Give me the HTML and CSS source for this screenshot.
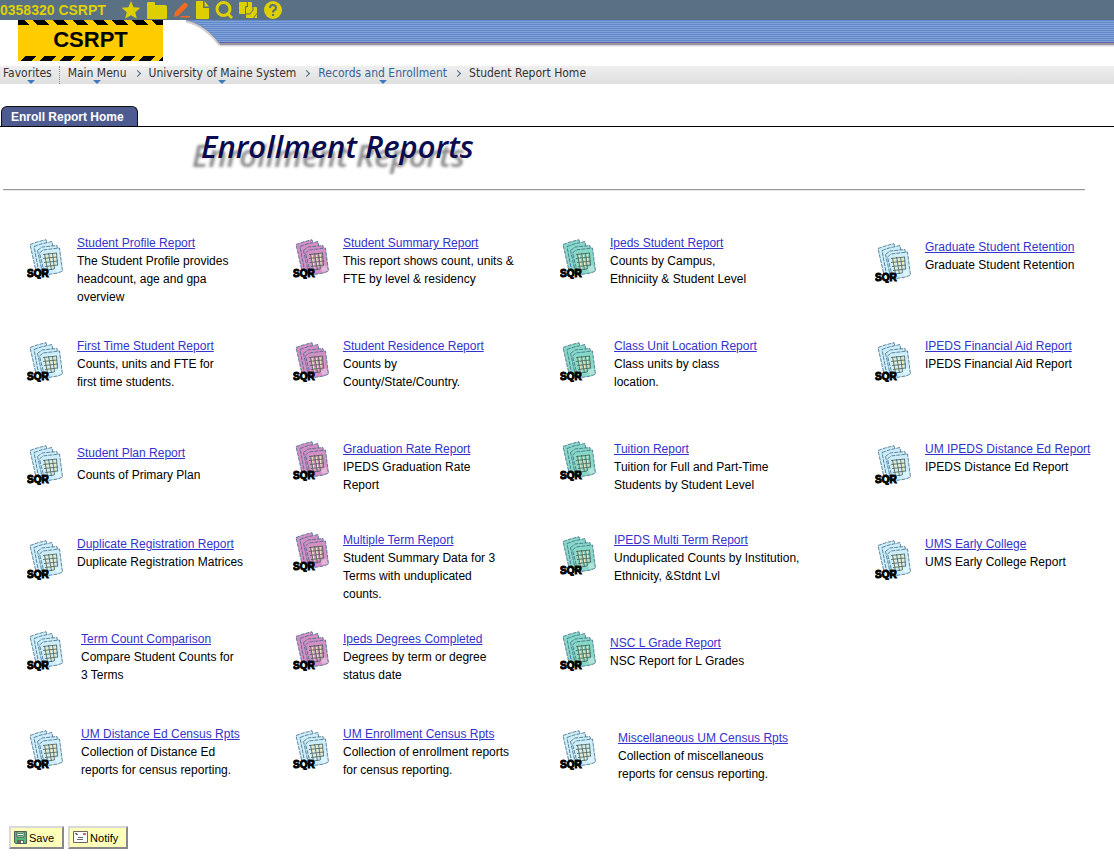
FILE: index.html
```html
<!DOCTYPE html>
<html lang="en">
<head>
<meta charset="utf-8">
<title>Student Report Home</title>
<link rel="stylesheet" href="styles.css">
</head>
<body>
<svg class="defs" aria-hidden="true">
  <symbol id="sheets" viewBox="0 0 36 40">
    <g stroke="#3f6a84" stroke-width=".8" stroke-dasharray="4 1">
      <path fill="currentColor" d="M3 5.500 L10 3 L19 .7 L27 27 L9 32 Z"/>
      <path fill="currentColor" d="M7 7.500 L14 5 L25 2.500 L29 30 L12 34 Z"/>
      <path fill="currentColor" d="M10.500 11.500 L15 8 L30 6.500 L33 31 L16 36 Z"/>
      <path fill="currentColor" d="M12.500 14 L16 11 L32.500 9 L35.500 32 L31 34 L18 36 Z"/>
    </g>
    <path fill="none" stroke="#eee6bd" stroke-width="1.400" d="M19 16l2 13M23 16l2 12M27 15l1 11"/>
    <path fill="none" stroke="#4a5e50" stroke-width=".8" d="M16 15.500l14-1.500M16 19.500l14-1.500M17 23.500l14-1.500M18 27.500l13-1.500M20 31l7-1M17.500 15l3 16M21.500 14l3 17M25.500 14l2 16M29.500 14l1 12"/>
    <path fill="#fff" fill-opacity=".35" d="M28 29l5-3 2 6-6 1z"/>
  </symbol>
</svg>
<header>
  <div class="topbar">
    <strong>0358320 CSRPT</strong>
    <span class="tools">
      <svg width="20" height="20" viewBox="0 0 20 20"><path d="M10 1l2.600 6.300 6.800.5-5.200 4.400 1.700 6.600L10 15.200 4.100 18.800l1.700-6.600L.6 7.800l6.800-.5z"/></svg>
      <svg width="20" height="20" viewBox="0 0 20 20"><path d="M1 2h6q1 0 1 1v2h10q2 0 2 2v11q0 1-1 1H1q-1 0-1-1V3q0-1 1-1z"/></svg>
      <svg class="pencil" width="17" height="20" viewBox="0 0 17 20"><path d="M1 17l1-5 8-8 4 3-9 9zM9 16h8v1.500H6zM11 3q3-1 4 3l-1 1-4-3z"/></svg>
      <svg width="13" height="20" viewBox="0 0 13 20"><path d="M1 1h6v7h6v10q0 1-1 1H1q-1 0-1-1V2q0-1 1-1zM8.500 1L13 6.500H8.500z"/></svg>
      <svg width="18" height="20" viewBox="0 0 18 20"><circle cx="8.500" cy="9" r="6.500" fill="none" stroke="#ded000" stroke-width="3"/><path d="M12 15l2-2 4 4-2 2z"/></svg>
      <svg width="18" height="20" viewBox="0 0 18 20"><path d="M1 2h6q1 0 1 1v3H7q-1 0-1 1v7H1q-1 0-1-1V3q0-1 1-1zM9 2h3q1 0 1 1v4h-2L9 9z"/><path d="M8 7h9q1 0 1 1v5l-4 5H8q-1 0-1-1V8q0-1 1-1zM18 14v4h-3z"/><path d="M7 14h4l3-4v-3" fill="none" stroke="#5a7083"/></svg>
      <svg width="20" height="20" viewBox="0 0 20 20"><circle cx="10" cy="10" r="9"/><path d="M7 8q0-3 3-3t3 3q0 1.500-2 2.500-1 .5-1 2M10 14v2" fill="none" stroke="#5a7083" stroke-width="2"/></svg>
    </span>
  </div>
  <div class="masthead">
    <div class="banner">CSRPT</div>
    <svg class="curve" width="37" height="27" viewBox="0 0 37 27">
      <defs><pattern id="lines" width="2" height="2" patternUnits="userSpaceOnUse"><path fill="#6389c8" d="M0 0h2v1H0z"/><path fill="#7ea1d9" d="M0 1h2v1H0z"/></pattern></defs>
      <path d="M3 1C17 4 27 12 37 25" fill="none" stroke="#d2d2d6" stroke-width="3"/>
      <path d="M3 0H37V24C27 11 17 3 3 0z" fill="url(#lines)"/>
      <path d="M3 0C17 3 27 11 37 24" fill="none" stroke="#8688a8"/>
    </svg>
    <div class="stripes"></div>
  </div>
</header>
<nav aria-label="Breadcrumb">
  <a class="menu favorites" href="#">Favorites</a>
  <a class="menu" href="#">Main Menu</a><i class="chevron"></i>
  <a class="menu" href="#">University of Maine System</a><i class="chevron"></i>
  <a class="menu current" href="#">Records and Enrollment</a><i class="chevron"></i>
  <span>Student Report Home</span>
</nav>
<div class="tabs"><a class="tab" href="#">Enroll Report Home</a></div>
<main>
  <h1>Enrollment Reports</h1>
  <hr>
  <div class="reports">
    <article><svg class="sqr blue"><use href="#sheets"/><text y="38">SQR</text></svg><div><a href="#">Student Profile Report</a><p>The Student Profile provides<br>headcount, age and gpa<br>overview</p></div></article>
    <article><svg class="sqr pink"><use href="#sheets"/><text y="38">SQR</text></svg><div><a href="#">Student Summary Report</a><p>This report shows count, units &amp;<br>FTE by level &amp; residency</p></div></article>
    <article><svg class="sqr green"><use href="#sheets"/><text y="38">SQR</text></svg><div><a href="#">Ipeds Student Report</a><p>Counts by Campus,<br>Ethniciity &amp; Student Level</p></div></article>
    <article class="lower"><svg class="sqr blue"><use href="#sheets"/><text y="38">SQR</text></svg><div><a href="#">Graduate Student Retention</a><p>Graduate Student Retention</p></div></article>

    <article><svg class="sqr blue"><use href="#sheets"/><text y="38">SQR</text></svg><div><a href="#">First Time Student Report</a><p>Counts, units and FTE for<br>first time students.</p></div></article>
    <article><svg class="sqr pink"><use href="#sheets"/><text y="38">SQR</text></svg><div><a href="#">Student Residence Report</a><p>Counts by<br>County/State/Country.</p></div></article>
    <article class="indent"><svg class="sqr green"><use href="#sheets"/><text y="38">SQR</text></svg><div><a href="#">Class Unit Location Report</a><p>Class units by class<br>location.</p></div></article>
    <article><svg class="sqr blue"><use href="#sheets"/><text y="38">SQR</text></svg><div><a href="#">IPEDS Financial Aid Report</a><p>IPEDS Financial Aid Report</p></div></article>

    <article class="lower raised spaced"><svg class="sqr blue"><use href="#sheets"/><text y="38">SQR</text></svg><div><a href="#">Student Plan Report</a><p>Counts of Primary Plan</p></div></article>
    <article class="raised"><svg class="sqr pink"><use href="#sheets"/><text y="38">SQR</text></svg><div><a href="#">Graduation Rate Report</a><p>IPEDS Graduation Rate<br>Report</p></div></article>
    <article class="indent raised"><svg class="sqr green"><use href="#sheets"/><text y="38">SQR</text></svg><div><a href="#">Tuition Report</a><p>Tuition for Full and Part-Time<br>Students by Student Level</p></div></article>
    <article><svg class="sqr blue"><use href="#sheets"/><text y="38">SQR</text></svg><div><a href="#">UM IPEDS Distance Ed Report</a><p>IPEDS Distance Ed Report</p></div></article>

    <article class="lower"><svg class="sqr blue"><use href="#sheets"/><text y="38">SQR</text></svg><div><a href="#">Duplicate Registration Report</a><p>Duplicate Registration Matrices</p></div></article>
    <article class="raised"><svg class="sqr pink"><use href="#sheets"/><text y="38">SQR</text></svg><div><a href="#">Multiple Term Report</a><p>Student Summary Data for 3<br>Terms with unduplicated<br>counts.</p></div></article>
    <article class="indent"><svg class="sqr green"><use href="#sheets"/><text y="38">SQR</text></svg><div><a href="#">IPEDS Multi Term Report</a><p>Unduplicated Counts by Institution,<br>Ethnicity, &amp;Stdnt Lvl</p></div></article>
    <article class="lower"><svg class="sqr blue"><use href="#sheets"/><text y="38">SQR</text></svg><div><a href="#">UMS Early College</a><p>UMS Early College Report</p></div></article>

    <article class="indent raised"><svg class="sqr blue"><use href="#sheets"/><text y="38">SQR</text></svg><div><a href="#">Term Count Comparison</a><p>Compare Student Counts for<br>3 Terms</p></div></article>
    <article class="raised"><svg class="sqr pink"><use href="#sheets"/><text y="38">SQR</text></svg><div><a href="#">Ipeds Degrees Completed</a><p>Degrees by term or degree<br>status date</p></div></article>
    <article class="raised sunk"><svg class="sqr green"><use href="#sheets"/><text y="38">SQR</text></svg><div><a href="#">NSC L Grade Report</a><p>NSC Report for L Grades</p></div></article>

    <article class="indent first"><svg class="sqr blue"><use href="#sheets"/><text y="38">SQR</text></svg><div><a href="#">UM Distance Ed Census Rpts</a><p>Collection of Distance Ed<br>reports for census reporting.</p></div></article>
    <article><svg class="sqr blue"><use href="#sheets"/><text y="38">SQR</text></svg><div><a href="#">UM Enrollment Census Rpts</a><p>Collection of enrollment reports<br>for census reporting.</p></div></article>
    <article class="indent-more sunk"><svg class="sqr blue"><use href="#sheets"/><text y="38">SQR</text></svg><div><a href="#">Miscellaneous UM Census Rpts</a><p>Collection of miscellaneous<br>reports for census reporting.</p></div></article>
  </div>
  <div class="actions">
    <button type="button"><svg width="13" height="13" viewBox="0 0 13 13"><path d="M.5.5h12v12h-11l-1-1z" fill="#55b877" stroke="#4c6358"/><path d="M3 1h7v5H3z" fill="#fff" stroke="#555"/><path d="M4 2.500h5M4 4.500h5" stroke="#38955a"/><path d="M3 9h7v3H3z" fill="#666"/><path d="M7 10h2v2H7z" fill="#fff"/></svg>Save</button>
    <button type="button"><svg width="15" height="13" viewBox="0 0 15 13"><path d="M.5.5h14v11H.5z" fill="#fff" stroke="#666"/><path d="M2 2.500h2M3 3.500h2M5 6.500h5M4 8.500h6" stroke="#666"/><path d="M10 2h3v2h-3z" fill="#c66b80"/></svg>Notify</button>
  </div>
</main>
</body>
</html>
```
FILE: styles.css
```css
* { box-sizing: border-box; }
body { margin: 0; background: #fff; color: #000; font: 12px/18px "Liberation Sans", Arial, sans-serif; }
.defs { position: absolute; width: 0; height: 0; }

.topbar { display: flex; align-items: center; gap: 15px; height: 20px; background: #5a7083; color: #ded000; }
.topbar strong { font-size: 14px; line-height: 20px; }
.tools { display: flex; gap: 6px; }
.tools svg { fill: #ded000; }
.tools .pencil { fill: #f06a20; }

.masthead { display: flex; align-items: flex-start; }
.banner {
  width: 145px; margin-left: 18px; padding: 5px 0 7px;
  background:
    repeating-linear-gradient(45deg, #000 0 8px, #fc0 8px 14px) top / 100% 5px no-repeat,
    repeating-linear-gradient(135deg, #fc0 0 5px, #000 5px 13px, #fc0 13px 14px) bottom / 100% 5px no-repeat,
    #fc0;
  font-size: 22px; font-weight: bold; line-height: 29px; text-align: center;
}
.curve { margin-left: 20px; }
.stripes {
  flex: 1; height: 27px;
  background:
    linear-gradient(#6262a8 0 1px, #9b95a0 1px 3px, #d5d5d5 3px 4px, #efefef 4px) 0 22px / 100% 5px no-repeat,
    repeating-linear-gradient(#6389c8 0 1px, #7ea1d9 1px 2px);
}

nav { display: flex; align-items: flex-start; height: 18px; margin-top: 5px; padding-left: 3px; background: linear-gradient(#efefef, #dfdfdf); color: #333; font: 12px/14px "DejaVu Sans Condensed", "Noto Sans", sans-serif; white-space: nowrap; }
nav a { color: inherit; text-decoration: none; }
.menu { position: relative; height: 18px; }
.menu::after { content: ""; position: absolute; left: 50%; bottom: 0; margin-left: -4px; border: 4px solid transparent; border-top-color: #3d7abb; border-bottom: 0; }
.favorites { margin-right: 8px; padding-right: 7px; border-right: 1px dotted #888; }
.current { color: #366498; }
.chevron { width: 5px; height: 5px; margin: 5px 9px 0 8px; border: solid #456789; border-width: 1px 1px 0 0; transform: rotate(45deg); }

.tabs { display: flex; margin-top: 22px; padding-left: 1px; border-bottom: 1px solid #000; }
.tab { padding: 1px 13px 0 9px; border: 1px solid #111; border-bottom: 0; border-radius: 6px 6px 0 0; background: #4e5b91; color: #fff; font-weight: bold; text-decoration: none; }

h1 { margin: 0; padding-left: 201px; color: #0b0b50; font: italic 600 31px/38px "Open Sans", sans-serif; text-shadow: -9px 9px 3px #888; }
hr { height: 2px; margin: 24px 29px 0 3px; border: 0; border-top: 1px solid #999; border-bottom: 1px solid #e8e8e8; }

.reports { display: grid; grid-template-columns: 266fr 267fr 315fr 239fr; grid-template-rows: 103px 103px 91px 99px 95px auto; padding: 43px 0 0 27px; }
article { display: flex; gap: 14px; white-space: nowrap; }
article p { margin: 0; }
article a { color: #3333cc; }
.first { grid-column: 1; }
.sqr { flex: none; width: 36px; height: 40px; margin-top: 5px; }
.sqr text { fill: #000; stroke: #000; stroke-width: 1px; font: bold 10px "Liberation Sans", sans-serif; }
.blue { color: #cdeefa; }
.pink { color: #d48fc5; }
.green { color: #87d8c8; }
.raised .sqr { margin-top: 1px; }
.lower { padding-top: 4px; }
.sunk > div { padding-top: 4px; }
.spaced p { padding-top: 4px; }
.indent { gap: 18px; }
.indent-more { gap: 22px; }

.actions { display: flex; gap: 4px; padding: 43px 0 15px 9px; }
button { display: flex; align-items: center; gap: 2px; height: 23px; padding: 0 8px 0 3px; border: 2px solid; border-color: #d9d9d9 #888 #888 #d9d9d9; background: #ffffb9; color: #000; font: 11px/18px "Liberation Sans", Arial, sans-serif; }
```
